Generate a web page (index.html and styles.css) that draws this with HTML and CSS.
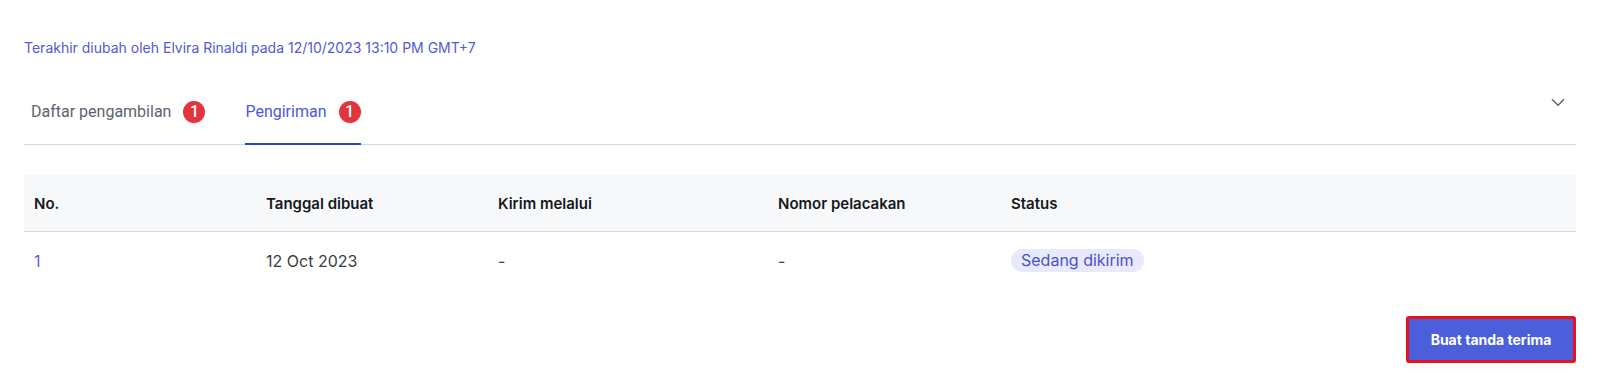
FILE: index.html
```html
<!DOCTYPE html>
<html lang="id">
<head>
    <meta charset="UTF-8">
    <meta name="viewport" content="width=device-width, initial-scale=1.0">
    <title>Pengiriman</title>
    <link rel="stylesheet" href="styles.css">
</head>
<body>
    <div class="page">
        <!-- info perubahan -->
        <div class="meta">Terakhir diubah oleh Elvira Rinaldi pada 12/10/2023 13:10 PM GMT+7</div>

        <!-- tab -->
        <div class="tabs">
            <div class="tab">Daftar pengambilan <span class="badge">1</span></div>
            <div class="tab tab-active">Pengiriman <span class="badge">1</span></div>
            <div class="tabs-toggle">
                <svg width="14" height="9" viewBox="0 0 14 9" fill="none">
                    <path d="M1 1.2 7 7.2 13 1.2" stroke="#5c6472" stroke-width="1.5"/>
                </svg>
            </div>
        </div>

        <!-- tabel pengiriman -->
        <div class="table">
            <div class="table-row table-head">
                <div class="cell">No.</div>
                <div class="cell">Tanggal dibuat</div>
                <div class="cell">Kirim melalui</div>
                <div class="cell">Nomor pelacakan</div>
                <div class="cell">Status</div>
            </div>
            <div class="table-row">
                <div class="cell cell-link">1</div>
                <div class="cell">12 Oct 2023</div>
                <div class="cell">-</div>
                <div class="cell">-</div>
                <div class="cell"><span class="status">Sedang dikirim</span></div>
            </div>
        </div>

        <div class="actions">
            <button class="primary-btn">Buat tanda terima</button>
        </div>
    </div>
</body>
</html>
```

FILE: styles.css
```css
* {
    margin: 0;
    padding: 0;
    box-sizing: border-box;
}

body {
    background: #ffffff;
    font-family: Inter, 'Noto Sans', sans-serif;
    color: #333840;
}

.page {
    padding: 40px 24px 0;
}

/* info perubahan */
.meta {
    font-size: 14px;
    line-height: 16px;
    color: #5459d6;
}

/* tab */
.tabs {
    display: flex;
    align-items: flex-start;
    gap: 40px;
    margin-top: 35px;
    padding-left: 7px;
    border-bottom: 1px solid #d3d5de;
}

.tab {
    display: flex;
    align-items: center;
    gap: 12px;
    padding: 10px 0 20px;
    font-family: Roboto, sans-serif;
    font-size: 16px;
    line-height: 22px;
    color: #5c6370;
    border-bottom: 2px solid transparent;
    margin-bottom: -1px;
}

.tab-active {
    color: #4e58d8;
    border-bottom-color: #2145d6;
}

.badge {
    width: 22px;
    height: 22px;
    border-radius: 50%;
    background: #e3343b;
    color: #fff;
    font-size: 16px;
    font-weight: 500;
    display: flex;
    align-items: center;
    justify-content: center;
}

.tabs-toggle {
    margin-left: auto;
    margin-top: 7px;
    margin-right: 11px;
    display: flex;
}

/* tabel */
.table {
    margin-top: 30px;
}

.table-row {
    display: grid;
    grid-template-columns: 232px 232px 280px 233px 1fr;
    align-items: center;
    height: 57px;
    padding-left: 10px;
    font-size: 16px;
    color: #3a3d44;
}

.table-head {
    background: #f7f8fa;
    border-bottom: 1px solid #d6d8df;
    font-size: 15px;
    font-weight: 600;
    color: #16181d;
}

.cell-link {
    color: #5b5fd8;
}

.status {
    display: inline-block;
    padding: 0 10px;
    height: 23px;
    line-height: 23px;
    border-radius: 12px;
    background: #e8e9fb;
    color: #4953c9;
}

/* tombol */
.actions {
    display: flex;
    justify-content: flex-end;
    margin-top: 27px;
}

.primary-btn {
    width: 170px;
    height: 47px;
    border: 3px solid #e3141f;
    border-radius: 3px;
    background: #4b5fdb;
    color: #fff;
    font-family: Inter, sans-serif;
    font-size: 14px;
    font-weight: 700;
    cursor: pointer;
}
```
